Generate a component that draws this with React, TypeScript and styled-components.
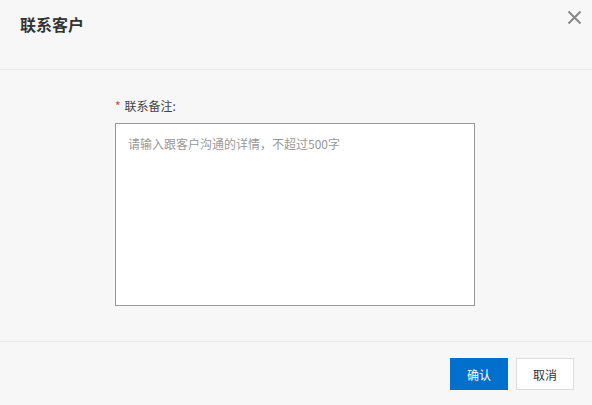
import React from "react";
import styled, { createGlobalStyle } from "styled-components";

const Global = createGlobalStyle`
  html, body { margin: 0; padding: 0; background: #f7f7f7; }
  body { font-family: "Noto Sans CJK SC", "Noto Sans", sans-serif; }
  * { box-sizing: border-box; }
`;

const Dialog = styled.div`
  width: 592px;
  height: 405px;
  background: #f7f7f7;
  display: flex;
  flex-direction: column;
`;

const Header = styled.div`
  height: 70px;
  display: flex;
  justify-content: space-between;
  align-items: flex-start;
  padding: 0 10px 0 20px;
  border-bottom: 1px solid #e9e9e9;
`;

const Title = styled.h2`
  margin: 12px 0 0;
  font-size: 16px;
  line-height: 24px;
  font-weight: 600;
  color: #333;
`;

const Close = styled.button`
  margin-top: 10px;
  width: 15px;
  height: 15px;
  padding: 0;
  border: none;
  background: none;
  display: flex;
  cursor: pointer;
`;

const Body = styled.div`
  height: 271px;
  display: flex;
  flex-direction: column;
  align-items: center;
  padding: 27px 2px 0 0;
`;

const Field = styled.div`
  width: 360px;
  display: flex;
  flex-direction: column;
  gap: 8px;
`;

const Label = styled.label`
  font-size: 12px;
  line-height: 18px;
  color: #444;
`;

const Star = styled.span`
  color: #e4393c;
  margin-right: 4px;
`;

const TextArea = styled.textarea`
  width: 360px;
  height: 183px;
  border: 1px solid #999;
  background: #fff;
  padding: 11px 12px;
  font-family: inherit;
  font-size: 12px;
  line-height: 18px;
  color: #333;
  resize: none;
  outline: none;
  &::placeholder { color: #999; }
`;

const Footer = styled.div`
  flex: 1;
  border-top: 1px solid #e9e9e9;
  display: flex;
  justify-content: flex-end;
  align-items: flex-start;
  gap: 8px;
  padding: 16px 18px 0 0;
`;

const Button = styled.button<{ $primary?: boolean }>`
  width: 58px;
  height: 32px;
  font-family: inherit;
  font-size: 12px;
  border: 1px solid ${(p) => (p.$primary ? "#0070cc" : "#dcdcdc")};
  background: ${(p) => (p.$primary ? "#0070cc" : "#fff")};
  color: ${(p) => (p.$primary ? "#fff" : "#333")};
  padding: 0;
  cursor: pointer;
`;

export default function App() {
  return (
    <>
      <Global />
      <Dialog>
        <Header>
          <Title>联系客户</Title>
          <Close aria-label="关闭">
            <svg width="15" height="15" viewBox="0 0 15 15">
              <path d="M1.5 1.5L13.5 13.5M13.5 1.5L1.5 13.5" stroke="#888" strokeWidth="2" fill="none" />
            </svg>
          </Close>
        </Header>
        <Body>
          <Field>
            <Label>
              <Star>*</Star>联系备注:
            </Label>
            <TextArea placeholder="请输入跟客户沟通的详情，不超过500字" />
          </Field>
        </Body>
        <Footer>
          <Button $primary>确认</Button>
          <Button>取消</Button>
        </Footer>
      </Dialog>
    </>
  );
}
